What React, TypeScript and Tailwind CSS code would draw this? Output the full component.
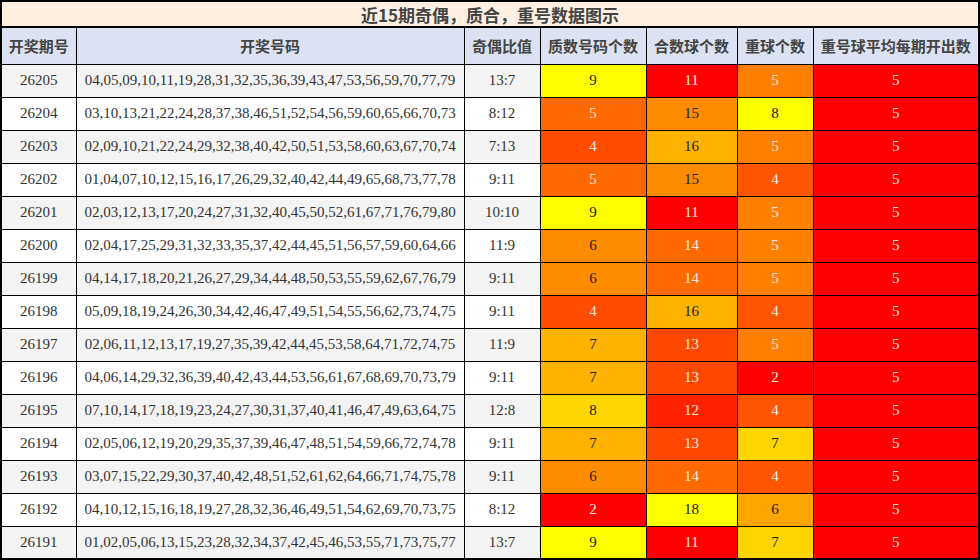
import React from 'react';

type Row = {
  issue: string;
  nums: string;
  ratio: string;
  prime: number;
  composite: number;
  repeat: number;
  avg: number;
};

const rows: Row[] = [
  { issue: '26205', nums: '04,05,09,10,11,19,28,31,32,35,36,39,43,47,53,56,59,70,77,79', ratio: '13:7', prime: 9, composite: 11, repeat: 5, avg: 5 },
  { issue: '26204', nums: '03,10,13,21,22,24,28,37,38,46,51,52,54,56,59,60,65,66,70,73', ratio: '8:12', prime: 5, composite: 15, repeat: 8, avg: 5 },
  { issue: '26203', nums: '02,09,10,21,22,24,29,32,38,40,42,50,51,53,58,60,63,67,70,74', ratio: '7:13', prime: 4, composite: 16, repeat: 5, avg: 5 },
  { issue: '26202', nums: '01,04,07,10,12,15,16,17,26,29,32,40,42,44,49,65,68,73,77,78', ratio: '9:11', prime: 5, composite: 15, repeat: 4, avg: 5 },
  { issue: '26201', nums: '02,03,12,13,17,20,24,27,31,32,40,45,50,52,61,67,71,76,79,80', ratio: '10:10', prime: 9, composite: 11, repeat: 5, avg: 5 },
  { issue: '26200', nums: '02,04,17,25,29,31,32,33,35,37,42,44,45,51,56,57,59,60,64,66', ratio: '11:9', prime: 6, composite: 14, repeat: 5, avg: 5 },
  { issue: '26199', nums: '04,14,17,18,20,21,26,27,29,34,44,48,50,53,55,59,62,67,76,79', ratio: '9:11', prime: 6, composite: 14, repeat: 5, avg: 5 },
  { issue: '26198', nums: '05,09,18,19,24,26,30,34,42,46,47,49,51,54,55,56,62,73,74,75', ratio: '9:11', prime: 4, composite: 16, repeat: 4, avg: 5 },
  { issue: '26197', nums: '02,06,11,12,13,17,19,27,35,39,42,44,45,53,58,64,71,72,74,75', ratio: '11:9', prime: 7, composite: 13, repeat: 5, avg: 5 },
  { issue: '26196', nums: '04,06,14,29,32,36,39,40,42,43,44,53,56,61,67,68,69,70,73,79', ratio: '9:11', prime: 7, composite: 13, repeat: 2, avg: 5 },
  { issue: '26195', nums: '07,10,14,17,18,19,23,24,27,30,31,37,40,41,46,47,49,63,64,75', ratio: '12:8', prime: 8, composite: 12, repeat: 4, avg: 5 },
  { issue: '26194', nums: '02,05,06,12,19,20,29,35,37,39,46,47,48,51,54,59,66,72,74,78', ratio: '9:11', prime: 7, composite: 13, repeat: 7, avg: 5 },
  { issue: '26193', nums: '03,07,15,22,29,30,37,40,42,48,51,52,61,62,64,66,71,74,75,78', ratio: '9:11', prime: 6, composite: 14, repeat: 4, avg: 5 },
  { issue: '26192', nums: '04,10,12,15,16,18,19,27,28,32,36,46,49,51,54,62,69,70,73,75', ratio: '8:12', prime: 2, composite: 18, repeat: 6, avg: 5 },
  { issue: '26191', nums: '01,02,05,06,13,15,23,28,32,34,37,42,45,46,53,55,71,73,75,77', ratio: '13:7', prime: 9, composite: 11, repeat: 7, avg: 5 },
];

const dark = 'text-[#222]';
const light = 'text-[#ffe6dc]';

// heat colours per column, written out so tailwind picks them up
const primeColor: Record<number, string> = {
  9: `bg-[#ffff00] ${dark}`,
  8: `bg-[#ffd700] ${dark}`,
  7: `bg-[#ffb300] ${dark}`,
  6: `bg-[#ff8c00] ${dark}`,
  5: `bg-[#ff6a00] ${light}`,
  4: `bg-[#ff4c00] ${light}`,
  2: `bg-[#ff0000] ${light}`,
};

const compositeColor: Record<number, string> = {
  18: `bg-[#ffff00] ${dark}`,
  16: `bg-[#ffb300] ${dark}`,
  15: `bg-[#ff8c00] ${dark}`,
  14: `bg-[#ff6a00] ${light}`,
  13: `bg-[#ff4700] ${light}`,
  12: `bg-[#ff2200] ${light}`,
  11: `bg-[#ff0000] ${light}`,
};

const repeatColor: Record<number, string> = {
  8: `bg-[#ffff00] ${dark}`,
  7: `bg-[#ffd500] ${dark}`,
  6: `bg-[#ffa500] ${dark}`,
  5: `bg-[#ff8000] ${light}`,
  4: `bg-[#ff5500] ${light}`,
  2: `bg-[#ff0000] ${light}`,
};

const headers = ['开奖期号', '开奖号码', '奇偶比值', '质数号码个数', '合数球个数', '重球个数', '重号球平均每期开出数'];

export default function App() {
  return (
    <div className="w-[980px] h-[560px] bg-white overflow-hidden">
      <table
        className="w-[978px] table-fixed border-collapse border-2 border-black text-[15px]"
        style={{ fontFamily: '"Liberation Serif", "Noto Sans CJK SC", serif' }}
      >
        <colgroup>
          <col className="w-[75px]" />
          <col className="w-[388px]" />
          <col className="w-[76px]" />
          <col className="w-[106px]" />
          <col className="w-[91px]" />
          <col className="w-[76px]" />
          <col className="w-[166px]" />
        </colgroup>
        <thead>
          <tr>
            <th
              colSpan={7}
              className="h-[26px] p-0 border-2 border-black bg-[#fdf0e2] text-[17px] font-bold text-[#444] text-center leading-none"
              style={{ fontFamily: '"Noto Sans CJK SC", sans-serif' }}
            >
              近15期奇偶，质合，重号数据图示
            </th>
          </tr>
          <tr>
            {headers.map((h) => (
              <th
                key={h}
                className="h-[37px] p-0 border border-black bg-[#dce2f1] text-[15px] font-bold text-[#444] text-center whitespace-nowrap"
                style={{ fontFamily: '"Noto Sans CJK SC", sans-serif' }}
              >
                {h}
              </th>
            ))}
          </tr>
        </thead>
        <tbody>
          {rows.map((r, i) => (
            <tr key={r.issue} className={i % 2 === 0 ? 'bg-[#f4f4f4]' : 'bg-white'}>
              <td className="h-[33px] p-0 border border-black text-center text-[#333]">{r.issue}</td>
              <td className="h-[33px] p-0 border border-black text-center text-[#333] whitespace-nowrap">{r.nums}</td>
              <td className="h-[33px] p-0 border border-black text-center text-[#333]">{r.ratio}</td>
              <td className={`h-[33px] p-0 border border-black text-center ${primeColor[r.prime]}`}>{r.prime}</td>
              <td className={`h-[33px] p-0 border border-black text-center ${compositeColor[r.composite]}`}>{r.composite}</td>
              <td className={`h-[33px] p-0 border border-black text-center ${repeatColor[r.repeat]}`}>{r.repeat}</td>
              <td className={`h-[33px] p-0 border border-black text-center bg-[#ff0000] ${light}`}>{r.avg}</td>
            </tr>
          ))}
        </tbody>
      </table>
    </div>
  );
}
